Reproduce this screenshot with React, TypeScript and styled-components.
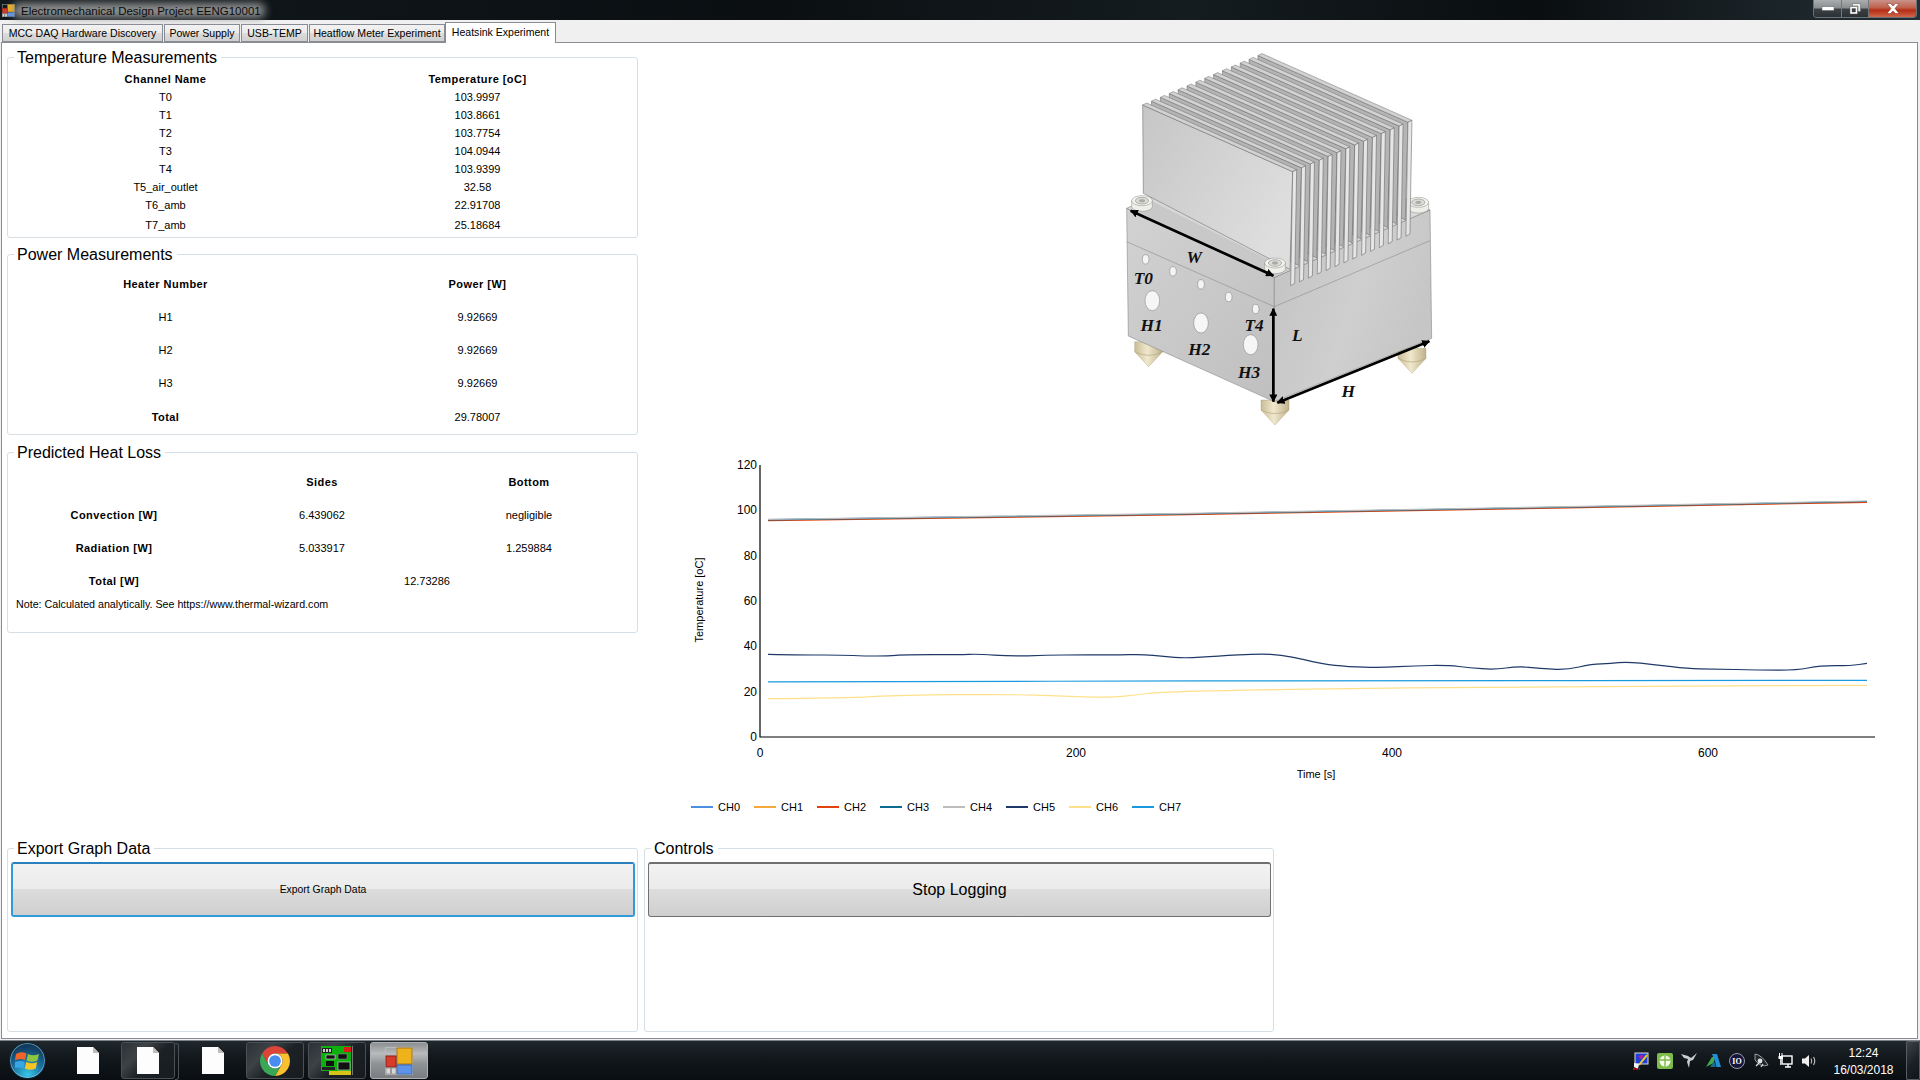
import * as React from 'react';
import styled, { createGlobalStyle } from 'styled-components';

const GlobalStyle = createGlobalStyle`
  html, body {
    margin: 0;
    padding: 0;
    background: #f0f0f0;
    overflow: hidden;
  }
  * {
    box-sizing: border-box;
  }
`;

const Shell = styled.div`
  width: 1920px;
  height: 1080px;
  display: flex;
  flex-direction: column;
  overflow: hidden;
  font-family: 'Liberation Sans', Arial, sans-serif;
  font-size: 11px;
  color: #000;
  background: #f0f0f0;
`;

/* window chrome */
const TitleBar = styled.div`
  height: 20px;
  flex: none;
  display: flex;
  align-items: center;
  padding-left: 2px;
  background: linear-gradient(90deg, #10181c 0%, #0b0f12 40%, #141c1f 62%, #0a0e10 80%, #243036 100%);
`;

const TitleText = styled.span`
  position: relative;
  margin-left: 6px;
  padding-top: 1px;
  font-size: 11.5px;
  color: #0b0b0b;
  white-space: nowrap;
  &::before {
    content: '';
    position: absolute;
    inset: -1px -4px -1px -8px;
    background: #8f9090;
    border-radius: 6px;
    filter: blur(4px);
    z-index: 0;
  }
  span {
    position: relative;
  }
`;

const WindowButtons = styled.div`
  margin-left: auto;
  margin-right: 3px;
  height: 18px;
  align-self: flex-start;
  display: flex;
  border: 1px solid #6c7478;
  border-top: 0;
  border-radius: 0 0 4px 4px;
  overflow: hidden;
`;

const WindowButton = styled.div<{ $width: number; $close?: boolean }>`
  width: ${(p) => p.$width}px;
  display: flex;
  align-items: center;
  justify-content: center;
  border-left: 1px solid #74797c;
  background: ${(p) =>
    p.$close
      ? 'linear-gradient(180deg, #c9938a 0%, #c0604c 45%, #b52d14 60%, #d0654a 100%)'
      : 'linear-gradient(180deg, #a9adae 0%, #8b8f91 45%, #3a4044 55%, #2a3034 100%)'};
  &:first-child {
    border-left: 0;
  }
`;

const TabStrip = styled.div`
  height: 22px;
  flex: none;
  display: flex;
  align-items: flex-end;
  padding-left: 2px;
  gap: 1px;
  background: #f0f0f0;
`;

const Tab = styled.div<{ $active?: boolean; $width: number }>`
  position: relative;
  z-index: 1;
  width: ${(p) => p.$width}px;
  height: ${(p) => (p.$active ? 21 : 18)}px;
  margin-bottom: ${(p) => (p.$active ? -1 : 0)}px;
  margin-left: ${(p) => (p.$active ? -1 : 0)}px;
  display: flex;
  align-items: center;
  justify-content: center;
  padding-bottom: ${(p) => (p.$active ? 2 : 0)}px;
  font-size: 10.55px;
  white-space: nowrap;
  border: 1px solid #898c95;
  border-bottom: ${(p) => (p.$active ? '0' : '1px solid #898c95')};
  background: ${(p) => (p.$active ? '#fff' : 'linear-gradient(180deg, #f2f2f2 0%, #ebebeb 50%, #dddddd 51%, #cfcfcf 100%)')};
`;

const TabPage = styled.div`
  height: 997px;
  flex: none;
  margin: 0 2px 0 1px;
  display: flex;
  flex-direction: column;
  border: 1px solid #898c95;
  background: #fff;
`;

const TopRow = styled.div`
  height: 805px;
  flex: none;
  display: flex;
`;

const LeftColumn = styled.div`
  width: 636px;
  flex: none;
  padding: 14px 0 0 5px;
  display: flex;
  flex-direction: column;
  gap: 16px;
  & > :last-child {
    margin-top: 1px;
  }
`;

const RightColumn = styled.div`
  flex: 1;
  display: flex;
  flex-direction: column;
`;

const BottomRow = styled.div`
  display: flex;
  gap: 6px;
  padding-left: 5px;
`;

const GroupBox = styled.section<{ $width?: number; $height?: number; $padLeft?: number; $padTop?: number }>`
  position: relative;
  width: ${(p) => p.$width ?? 631}px;
  height: ${(p) => p.$height ?? 181}px;
  padding: ${(p) => p.$padTop ?? 12}px 0 0 ${(p) => p.$padLeft ?? 0}px;
  border: 1px solid #d5dfe5;
  border-radius: 3px;
`;

const GroupTitle = styled.h2`
  position: absolute;
  top: -9px;
  left: 6px;
  margin: 0;
  padding: 0 4px 0 3px;
  background: #fff;
  font-size: 16px;
  line-height: 18px;
  font-weight: 400;
`;

const Cell = styled.div<{ $bold?: boolean; $span?: number }>`
  display: flex;
  align-items: center;
  justify-content: center;
  font-weight: ${(p) => (p.$bold ? 700 : 400)};
  letter-spacing: ${(p) => (p.$bold ? '0.45px' : '0')};
  grid-column: ${(p) => (p.$span ? `span ${p.$span}` : 'auto')};
`;

const TempGrid = styled.div`
  display: grid;
  grid-template-columns: 315px 309px;
  grid-auto-rows: 18px;
  & > :nth-last-child(-n + 2) {
    padding-top: 4px;
  }
`;

const PowerGrid = styled.div`
  display: grid;
  grid-template-columns: 315px 309px;
  grid-auto-rows: 33px;
  & > :nth-last-child(-n + 2) {
    padding-top: 2px;
  }
`;

const LossGrid = styled.div`
  display: grid;
  grid-template-columns: 212px 204px 210px;
  grid-auto-rows: 33px;
`;

const Note = styled.p`
  margin: 0;
  padding-left: 8px;
  font-size: 10.7px;
  line-height: 14px;
`;

const AeroButton = styled.button<{ $focused?: boolean; $large?: boolean }>`
  display: block;
  width: ${(p) => (p.$focused ? 624 : 623)}px;
  height: 55px;
  padding: 0;
  font-family: inherit;
  color: #000;
  font-size: ${(p) => (p.$large ? 16 : 10.4)}px;
  border: ${(p) => (p.$focused ? '2px solid #2f9bd8' : '1px solid #707070')};
  border-top: 2px solid ${(p) => (p.$focused ? '#2a7fbd' : '#6f6f6f')};
  border-radius: 3px;
  background: linear-gradient(180deg, #f2f2f2 0%, #ebebeb 48%, #dddddd 49%, #cfcfcf 100%);
`;

/* chart */
const ChartSvg = styled.svg`
  display: block;
  margin-left: 42px;
  width: 1240px;
  height: 352px;
`;

const AxisText = styled.text<{ $size?: number }>`
  font-family: 'Liberation Sans', Arial, sans-serif;
  font-size: ${(p) => p.$size ?? 12}px;
  fill: #000;
`;

const HeatsinkSvg = styled.svg`
  display: block;
  margin-left: 462px;
  width: 360px;
  height: 397px;
  flex: none;
`;

const SinkLabel = styled.text`
  font-family: 'Liberation Serif', 'Times New Roman', serif;
  font-size: 52px;
  font-weight: 700;
  font-style: italic;
  fill: #111;
  text-anchor: middle;
`;

const Legend = styled.div`
  display: flex;
  margin: 8px 0 0 53px;
`;

const LegendItem = styled.div`
  width: 63px;
  display: flex;
  align-items: center;
  gap: 5px;
  line-height: 14px;
`;

const LegendLine = styled.span<{ $color: string }>`
  width: 22px;
  height: 2px;
  background: ${(p) => p.$color};
`;

/* taskbar */
const Taskbar = styled.footer`
  margin-top: 1px;
  height: 40px;
  flex: none;
  display: flex;
  align-items: center;
  gap: 4px;
  padding-left: 9px;
  border-top: 1px solid #7d8489;
  background: linear-gradient(180deg, #20282d 0%, #12181c 40%, #0a0e12 100%);
`;

const StartOrb = styled.div`
  width: 37px;
  height: 37px;
  margin-right: 9px;
  flex: none;
  display: flex;
  align-items: center;
  justify-content: center;
  border-radius: 50%;
  border: 1px solid #0d2433;
  background: radial-gradient(circle at 50% 90%, #37c6e8 0%, #1a6c9c 45%, #123f63 75%, #0f2a40 100%);
  box-shadow: inset 0 0 0 1px rgba(160, 210, 235, 0.55);
`;

const TaskSlot = styled.div<{ $state?: 'open' | 'stacked' | 'active' }>`
  position: relative;
  width: 58px;
  height: 37px;
  flex: none;
  display: flex;
  align-items: center;
  justify-content: center;
  border-radius: 3px;
  ${(p) =>
    p.$state === 'active'
      ? 'border: 1px solid #aeb2b4; background: linear-gradient(180deg, #8b8f91 0%, #b9bbbc 30%, #8f9294 60%, #7a7e80 100%);'
      : p.$state
        ? 'border: 1px solid #4a5054; background: linear-gradient(135deg, #2b3135 0%, #3c4246 30%, #1c2125 55%, #181c20 100%);'
        : ''}
  ${(p) => (p.$state === 'stacked' ? 'width: 54px; margin-right: 5px;' : '')}
  ${(p) =>
    p.$state === 'stacked'
      ? `&::after {
          content: '';
          position: absolute;
          top: 0;
          right: -5px;
          width: 3px;
          height: 35px;
          border: 1px solid #4a5054;
          border-left: 0;
          border-radius: 0 3px 3px 0;
        }`
      : ''}
`;

const Tray = styled.div`
  margin-left: auto;
  display: flex;
  align-items: center;
  height: 100%;
`;

const TraySlot = styled.div`
  width: 24px;
  display: flex;
  align-items: center;
  justify-content: center;
`;

const Clock = styled.div`
  width: 85px;
  padding-top: 1px;
  display: flex;
  flex-direction: column;
  align-items: center;
  gap: 3px;
  color: #fff;
  font-size: 12px;
  line-height: 14px;
`;

const ShowDesktop = styled.div`
  width: 14px;
  height: 100%;
  border: 1px solid #555b60;
  border-radius: 1px;
  background: linear-gradient(135deg, #3c4347 0%, #1b2024 55%, #111519 100%);
`;

type Pt = [number, number];

const hot: Pt[] = [[768, 520], [1076, 515.7], [1270, 513], [1867, 501.7]];
const shift = (pts: Pt[], dy: number): Pt[] => pts.map(([x, y]) => [x, y + dy]);

const ch5: Pt[] = [
  [768, 654.3], [806, 655], [842, 655], [864, 656], [889, 656], [903, 654.7], [960, 654.7], [978, 654],
  [1010, 656.3], [1046, 655.3], [1081, 654.7], [1117, 655], [1142, 654.3], [1164, 656.3], [1185, 658.3],
  [1217, 656], [1260, 653.7], [1281, 655], [1303, 659.3], [1322, 664], [1348, 666.7], [1381, 667.7],
  [1415, 665.7], [1448, 665.3], [1470, 667.7], [1494, 669.7], [1518, 666.3], [1540, 668.3], [1566, 670],
  [1592, 664], [1611, 663.7], [1626, 661.7], [1655, 664.7], [1688, 668.7], [1711, 669], [1759, 670],
  [1796, 670.3], [1820, 665.7], [1851, 665.7], [1867, 663.3],
];

const ch6: Pt[] = [
  [768, 698.7], [842, 698.3], [903, 695], [1010, 694.3], [1060, 696], [1110, 697.7], [1135, 695], [1160, 692],
  [1260, 689.7], [1320, 688.9], [1496, 687], [1867, 685.3],
];

const ch7: Pt[] = [[768, 681.8], [1000, 681.5], [1100, 681], [1300, 680.8], [1867, 680.3]];

const channels = [
  { name: 'CH0', color: '#4a90e2', points: shift(hot, -0.3) },
  { name: 'CH1', color: '#f5a93b', points: shift(hot, 0.1) },
  { name: 'CH2', color: '#e2420f', points: shift(hot, 0.6) },
  { name: 'CH3', color: '#0f6a8f', points: shift(hot, -0.2) },
  { name: 'CH4', color: '#bdbdbd', points: shift(hot, -0.7) },
  { name: 'CH5', color: '#1f3a68', points: ch5 },
  { name: 'CH6', color: '#ffe08a', points: ch6 },
  { name: 'CH7', color: '#1a9ade', points: ch7 },
];

// midpoints as quadratic anchors, good enough for a smoothed chart line
const smooth = (pts: Pt[]) => {
  let d = `M${pts[0][0]} ${pts[0][1]}`;
  for (let i = 1; i < pts.length - 1; i++) {
    const mx = (pts[i][0] + pts[i + 1][0]) / 2;
    const my = (pts[i][1] + pts[i + 1][1]) / 2;
    d += ` Q${pts[i][0]} ${pts[i][1]} ${mx} ${my}`;
  }
  const last = pts[pts.length - 1];
  return `${d} L${last[0]} ${last[1]}`;
};

const yTicks = [0, 20, 40, 60, 80, 100, 120];
const xTicks = [0, 200, 400, 600];

const Chart: React.FC = () => (
  <ChartSvg viewBox="680 440 1240 352">
    <path d="M760 465 V737 H1875" fill="none" stroke="#000" strokeWidth="1.2" />
    {yTicks.map((v) => (
      <AxisText key={v} x={757} y={737 - v * 2.267 + 4} textAnchor="end">{v}</AxisText>
    ))}
    {xTicks.map((v) => (
      <AxisText key={v} x={760 + v * 1.58} y={757} textAnchor="middle">{v}</AxisText>
    ))}
    <AxisText $size={11} x={703} y={600} textAnchor="middle" transform="rotate(-90 703 600)">Temperature [oC]</AxisText>
    <AxisText $size={11} x={1316} y={778} textAnchor="middle">Time [s]</AxisText>
    {channels.map((c) => (
      <path key={c.name} d={smooth(c.points)} fill="none" stroke={c.color} strokeWidth="1.2" />
    ))}
  </ChartSvg>
);

const fins = Array.from({ length: 14 }, (_, i) => 13 - i);
const holes: Pt[] = [[137, 658], [219, 694], [303, 733], [386, 771], [467, 807]];
const bigHoles: Pt[] = [[157, 782], [303, 849], [452, 914]];

const poly = (pts: number[][]) => pts.map((p) => p.join(',')).join(' ');

const Foot: React.FC<{ x: number; y: number }> = ({ x, y }) => (
  <g>
    <path d={`M${x - 42} ${y} V${y + 30} L${x} ${y + 75} L${x + 42} ${y + 30} V${y} Z`} fill="url(#brass)" stroke="#9a8f6d" strokeWidth="1" />
    <path d={`M${x - 42} ${y + 30} Q${x} ${y + 52} ${x + 42} ${y + 30}`} fill="none" stroke="#b4a67f" strokeWidth="2" />
  </g>
);

const Screw: React.FC<{ x: number; y: number }> = ({ x, y }) => (
  <g>
    <path d={`M${x - 31} ${y - 8} V${y + 10} A31 14 0 0 0 ${x + 31} ${y + 10} V${y - 8} Z`} fill="#efefe9" stroke="#8a8a86" strokeWidth="1.5" />
    <ellipse cx={x} cy={y - 8} rx="31" ry="15" fill="#f4f4f0" stroke="#8a8a86" strokeWidth="1.5" />
    <ellipse cx={x} cy={y - 8} rx="20" ry="10" fill="#dcdcd6" stroke="#777" strokeWidth="1.5" />
    <ellipse cx={x} cy={y - 8} rx="9" ry="5" fill="#aaa" />
  </g>
);

const Heatsink: React.FC = () => (
  <HeatsinkSvg viewBox="0 9 1080 1191">
    <defs>
      <linearGradient id="brass" x1="0" x2="1" y1="0" y2="0">
        <stop offset="0" stopColor="#c9bd97" />
        <stop offset="0.45" stopColor="#f1e8cd" />
        <stop offset="1" stopColor="#bfb28b" />
      </linearGradient>
      <linearGradient id="sideFace" x1="0" x2="1" y1="0" y2="1">
        <stop offset="0" stopColor="#d2d2d2" />
        <stop offset="1" stopColor="#bfbfbf" />
      </linearGradient>
      <linearGradient id="rightFace" x1="0" x2="1" y1="0" y2="0.4">
        <stop offset="0" stopColor="#c2c2c2" />
        <stop offset="0.6" stopColor="#cfcfcf" />
        <stop offset="1" stopColor="#c6c6c6" />
      </linearGradient>
      <linearGradient id="finFace" x1="0" x2="1" y1="0" y2="0.6">
        <stop offset="0" stopColor="#c6c6c6" />
        <stop offset="1" stopColor="#dedede" />
      </linearGradient>
      <marker id="head" viewBox="0 0 10 10" refX="9" refY="5" markerWidth="3" markerHeight="3" orient="auto-start-reverse">
        <path d="M0 0 L10 5 L0 10 Z" fill="#000" />
      </marker>
    </defs>

    <Foot x={146} y={905} />
    <Foot x={936} y={925} />
    <Foot x={525} y={1080} />

    <polygon points="80,505 523,712 523,1085 85,888" fill="url(#sideFace)" stroke="#777" strokeWidth="1.5" />
    <polygon points="523,712 990,510 995,895 523,1085" fill="url(#rightFace)" stroke="#777" strokeWidth="1.5" />
    <polygon points="80,505 520,300 990,510 523,712" fill="#d9d9d9" stroke="#777" strokeWidth="1.5" />
    <polygon points="130,470 568,690 523,708 100,510" fill="#c8c8c8" />
    <path d="M80 605 L523 800 L990 602" fill="none" stroke="#808080" strokeWidth="1.5" />

    <Screw x={955} y={495} />

    {fins.map((i) => {
      const dx = 26.6 * i;
      const dy = -11.4 * i;
      return (
        <g key={i} transform={`translate(${dx} ${dy})`}>
          <polygon
            points={poly([[128, 195], [578, 395], [570, 688], [130, 460]])}
            fill={i === 0 ? 'url(#finFace)' : '#b4b4b4'}
            stroke="#666"
            strokeWidth="1.6"
          />
          <polygon points={poly([[128, 195], [140, 189], [590, 389], [578, 395]])} fill="#d2d2d2" stroke="#666" strokeWidth="1.4" />
          <polygon points={poly([[578, 395], [590, 389], [584, 730], [572, 737]])} fill="#e6e6e6" stroke="#5e5e5e" strokeWidth="1.6" />
        </g>
      );
    })}

    <Screw x={126} y={490} />
    <Screw x={525} y={677} />

    {holes.map(([x, y]) => (
      <ellipse key={x} cx={x} cy={y} rx="10" ry="14" fill="#f4f4f4" stroke="#7d7d7d" strokeWidth="1.5" />
    ))}
    {bigHoles.map(([x, y]) => (
      <ellipse key={x} cx={x} cy={y} rx="22" ry="30" fill="#f6f6f6" stroke="#7d7d7d" strokeWidth="1.5" />
    ))}

    <line x1="92" y1="512" x2="520" y2="707" stroke="#000" strokeWidth="8" markerStart="url(#head)" markerEnd="url(#head)" />
    <line x1="520" y1="806" x2="520" y2="1085" stroke="#000" strokeWidth="8" markerStart="url(#head)" markerEnd="url(#head)" />
    <line x1="532" y1="1088" x2="988" y2="904" stroke="#000" strokeWidth="8" markerStart="url(#head)" markerEnd="url(#head)" />

    <SinkLabel x={283} y={670}>W</SinkLabel>
    <SinkLabel x={130} y={732}>T0</SinkLabel>
    <SinkLabel x={155} y={872}>H1</SinkLabel>
    <SinkLabel x={298} y={946}>H2</SinkLabel>
    <SinkLabel x={447} y={1014}>H3</SinkLabel>
    <SinkLabel x={462} y={874}>T4</SinkLabel>
    <SinkLabel x={592} y={902}>L</SinkLabel>
    <SinkLabel x={745} y={1071}>H</SinkLabel>
  </HeatsinkSvg>
);

const AppGlyph: React.FC<{ size: number }> = ({ size }) => (
  <svg width={size} height={size} viewBox="0 0 28 28">
    <rect x="0.5" y="0.5" width="27" height="27" fill="none" stroke="#b9b9b9" />
    <rect x="12" y="1" width="15" height="16" fill="#efb21a" stroke="#a9791a" />
    <rect x="12" y="18" width="15" height="9" fill="#5d94ea" stroke="#3d6cb7" />
    <rect x="1" y="9" width="10" height="11" fill="#d83a2b" stroke="#8e2018" />
    <rect x="1" y="21" width="4.5" height="6" fill="#d8d8d8" stroke="#999" />
    <rect x="6.5" y="21" width="4.5" height="6" fill="#d8d8d8" stroke="#999" />
  </svg>
);

const DocIcon: React.FC = () => (
  <svg width="22" height="27" viewBox="0 0 22 27">
    <path d="M0 0 H16 L22 6 V27 H0 Z" fill="#fdfdfd" />
    <path d="M16 0 L22 6 H16 Z" fill="#bdbdbd" />
  </svg>
);

const ChromeIcon: React.FC = () => (
  <svg width="30" height="30" viewBox="2 2 44 44">
    <path d="M4.95 13 A22 22 0 0 1 43.05 13 H24 A11 11 0 0 0 14.47 29.5 Z" fill="#db4437" />
    <path d="M43.05 13 A22 22 0 0 1 24 46 L33.53 29.5 A11 11 0 0 0 24 13 Z" fill="#fbc02d" />
    <path d="M24 46 A22 22 0 0 1 4.95 13 L14.47 29.5 A11 11 0 0 0 33.53 29.5 Z" fill="#3aa757" />
    <circle cx="24" cy="24" r="11" fill="#fff" />
    <circle cx="24" cy="24" r="8.6" fill="#4a8cf0" />
  </svg>
);

const BoardIcon: React.FC = () => (
  <svg width="32" height="30" viewBox="0 0 32 30">
    <rect x="0" y="0" width="30" height="25" fill="#0db10d" />
    <rect x="8" y="25" width="22" height="4" fill="#d8c21a" />
    <rect x="1" y="2" width="10" height="5" fill="#222" />
    <rect x="2" y="3" width="2" height="3" fill="#ccc" />
    <rect x="5" y="3" width="2" height="3" fill="#ccc" />
    <rect x="8" y="3" width="2" height="3" fill="#ccc" />
    <rect x="23" y="1" width="7" height="5" fill="#e01818" />
    <rect x="5" y="9" width="9" height="4" fill="#111" stroke="#ddd" strokeWidth="0.6" />
    <rect x="17" y="8" width="9" height="5" fill="#111" stroke="#888" strokeWidth="0.6" />
    <rect x="5" y="15" width="8" height="5" fill="#111" />
    <rect x="1" y="21" width="13" height="3" fill="#222" />
    <rect x="17" y="16" width="12" height="8" fill="#111" stroke="#ddd" strokeWidth="0.6" />
    <rect x="31" y="0" width="1" height="29" fill="#777" />
  </svg>
);

const WinFlag: React.FC = () => (
  <svg width="25" height="22" viewBox="0 0 25 22">
    <path d="M1 4 Q6 1 11.5 3.5 L10 10 Q5 8 0 10.5 Z" fill="#f0642a" />
    <path d="M13 4 Q18 6.5 24 4 L22.5 10.5 Q17 13 11.5 10.5 Z" fill="#8cc63f" />
    <path d="M-0.2 12 Q5 10 9.7 12 L8.3 18.5 Q4 16.5 -1.5 18.5 Z" fill="#39a7e6" />
    <path d="M11.2 12 Q17 14.5 22.2 12 L20.8 18.5 Q15 21 9.8 18.5 Z" fill="#f7c325" />
  </svg>
);

const TrayIcons: React.FC = () => (
  <Tray>
    <TraySlot>
      <svg width="16" height="18" viewBox="0 0 16 18">
        <rect x="2" y="1" width="13" height="11" fill="#1f3fd8" stroke="#ddd" />
        <path d="M5 4 L10 3 L9 8 Z" fill="#c8189a" />
        <path d="M14 3 L6 13" stroke="#f2d21a" strokeWidth="2" />
        <path d="M1 11 L6 12 L5 17 L1 15 Z" fill="#f4f4f4" />
        <path d="M0 17 H7" stroke="#e01818" strokeWidth="1.6" strokeDasharray="2 1" />
      </svg>
    </TraySlot>
    <TraySlot>
      <svg width="16" height="16" viewBox="0 0 16 16">
        <rect x="0" y="0" width="16" height="16" rx="2" fill="#7dbb4a" />
        <circle cx="8" cy="8" r="5.5" fill="#f4fbe8" />
        <path d="M8 2.5 V13.5 M2.5 7 H13.5" stroke="#7dbb4a" strokeWidth="1.4" />
      </svg>
    </TraySlot>
    <TraySlot>
      <svg width="17" height="15" viewBox="0 0 17 15">
        <path d="M0 1 L7 3 L10 5 L16 0 L12 7 L9 8 L8 15 L6 9 L7 6 L3 5 Z" fill="#c9cdd0" />
      </svg>
    </TraySlot>
    <TraySlot>
      <svg width="15" height="13" viewBox="0 0 15 13">
        <path d="M0 13 L6 3 L9 3 L7.5 9 Z" fill="#3fae49" />
        <path d="M6 0 H11 L15 13 H10.5 L8.8 7 Z" fill="#1f8fd6" />
        <path d="M4 13 L7 8.5 H8.8 L9.8 13 Z" fill="#1a6c8f" />
      </svg>
    </TraySlot>
    <TraySlot>
      <svg width="16" height="16" viewBox="0 0 16 16">
        <circle cx="8" cy="8" r="7.5" fill="#16163c" stroke="#9a9aa8" />
        <text x="8" y="11" textAnchor="middle" fontSize="8" fontWeight="700" fontFamily="Liberation Serif, serif" fill="#fff">IO</text>
      </svg>
    </TraySlot>
    <TraySlot>
      <svg width="16" height="16" viewBox="0 0 16 16">
        <path d="M2 1 Q9 2 15 12 Q8 15 2 7 Z" fill="#23282c" stroke="#b8bcbe" strokeWidth="0.8" />
        <circle cx="7" cy="8" r="2.4" fill="#dfe2e4" />
        <path d="M3 13 L6 10 M8 14 L10 11" stroke="#dfe2e4" strokeWidth="1.2" />
      </svg>
    </TraySlot>
    <TraySlot>
      <svg width="15" height="16" viewBox="0 0 15 16">
        <rect x="4" y="3" width="10" height="8" fill="#0d1114" stroke="#fff" strokeWidth="1.4" />
        <path d="M7 14 H13 M10 11 V14" stroke="#fff" strokeWidth="1.4" />
        <path d="M1.5 0 V3 M4 0 V3" stroke="#fff" />
        <rect x="0.5" y="3" width="4.5" height="3" fill="#fff" />
        <path d="M2.7 6 V12" stroke="#fff" />
      </svg>
    </TraySlot>
    <TraySlot>
      <svg width="15" height="14" viewBox="0 0 15 14">
        <path d="M0 4.5 H3 L7 1 V13 L3 9.5 H0 Z" fill="#f0f0f0" />
        <path d="M9 4.5 Q10.5 7 9 9.5 M11.5 3 Q14 7 11.5 11" fill="none" stroke="#bfc3c6" strokeWidth="1.1" />
      </svg>
    </TraySlot>
    <Clock>
      <span>12:24</span>
      <span>16/03/2018</span>
    </Clock>
    <ShowDesktop />
  </Tray>
);

const tempRows = [
  ['T0', '103.9997'],
  ['T1', '103.8661'],
  ['T2', '103.7754'],
  ['T3', '104.0944'],
  ['T4', '103.9399'],
  ['T5_air_outlet', '32.58'],
  ['T6_amb', '22.91708'],
  ['T7_amb', '25.18684'],
];

const tabs = [
  { label: 'MCC DAQ Hardware Discovery', width: 161 },
  { label: 'Power Supply', width: 76 },
  { label: 'USB-TEMP', width: 67 },
  { label: 'Heatflow Meter Experiment', width: 136 },
];

const App: React.FC = () => (
  <Shell>
    <GlobalStyle />
    <TitleBar>
      <AppGlyph size={13} />
      <TitleText><span>Electromechanical Design Project EENG10001</span></TitleText>
      <WindowButtons>
        <WindowButton $width={27}>
          <svg width="12" height="5" viewBox="0 0 12 5"><rect width="12" height="4" y="0.5" fill="#fff" stroke="#555" strokeWidth="0.5" /></svg>
        </WindowButton>
        <WindowButton $width={27}>
          <svg width="12" height="12" viewBox="0 0 12 12">
            <path d="M3.5 0.5 H11.5 V8.5 H9 V3 H3.5 Z" fill="#eee" stroke="#555" strokeWidth="0.5" />
            <path d="M1 3.5 H8.5 V11 H1 Z M3 5.5 V9 H6.5 V5.5 Z" fill="#fff" fillRule="evenodd" stroke="#555" strokeWidth="0.5" />
          </svg>
        </WindowButton>
        <WindowButton $width={48} $close>
          <svg width="14" height="11" viewBox="0 0 14 11">
            <path d="M1 0.5 H4.5 L7 3 L9.5 0.5 H13 L9 5.5 L13 10.5 H9.5 L7 8 L4.5 10.5 H1 L5 5.5 Z" fill="#fff" stroke="#7a2a1c" strokeWidth="0.5" />
          </svg>
        </WindowButton>
      </WindowButtons>
    </TitleBar>

    <TabStrip>
      {tabs.map((t) => (
        <Tab key={t.label} $width={t.width}>{t.label}</Tab>
      ))}
      <Tab $active $width={111}>Heatsink Experiment</Tab>
    </TabStrip>

    <TabPage>
      <TopRow>
        <LeftColumn>
          <GroupBox>
            <GroupTitle>Temperature Measurements</GroupTitle>
            <TempGrid>
              <Cell $bold>Channel Name</Cell>
              <Cell $bold>Temperature [oC]</Cell>
              {tempRows.map(([name, value]) => (
                <React.Fragment key={name}>
                  <Cell>{name}</Cell>
                  <Cell>{value}</Cell>
                </React.Fragment>
              ))}
            </TempGrid>
          </GroupBox>

          <GroupBox>
            <GroupTitle>Power Measurements</GroupTitle>
            <PowerGrid>
              <Cell $bold>Heater Number</Cell>
              <Cell $bold>Power [W]</Cell>
              <Cell>H1</Cell>
              <Cell>9.92669</Cell>
              <Cell>H2</Cell>
              <Cell>9.92669</Cell>
              <Cell>H3</Cell>
              <Cell>9.92669</Cell>
              <Cell $bold>Total</Cell>
              <Cell>29.78007</Cell>
            </PowerGrid>
          </GroupBox>

          <GroupBox>
            <GroupTitle>Predicted Heat Loss</GroupTitle>
            <LossGrid>
              <Cell />
              <Cell $bold>Sides</Cell>
              <Cell $bold>Bottom</Cell>
              <Cell $bold>Convection [W]</Cell>
              <Cell>6.439062</Cell>
              <Cell>negligible</Cell>
              <Cell $bold>Radiation [W]</Cell>
              <Cell>5.033917</Cell>
              <Cell>1.259884</Cell>
              <Cell $bold>Total [W]</Cell>
              <Cell $span={2}>12.73286</Cell>
            </LossGrid>
            <Note>Note: Calculated analytically. See https://www.thermal-wizard.com</Note>
          </GroupBox>
        </LeftColumn>

        <RightColumn>
          <Heatsink />
          <Chart />
          <Legend>
            {channels.map((c) => (
              <LegendItem key={c.name}>
                <LegendLine $color={c.color} />
                {c.name}
              </LegendItem>
            ))}
          </Legend>
        </RightColumn>
      </TopRow>

      <BottomRow>
        <GroupBox $height={184} $padLeft={3} $padTop={13}>
          <GroupTitle>Export Graph Data</GroupTitle>
          <AeroButton $focused>Export Graph Data</AeroButton>
        </GroupBox>
        <GroupBox $width={630} $height={184} $padLeft={3} $padTop={13}>
          <GroupTitle>Controls</GroupTitle>
          <AeroButton $large>Stop Logging</AeroButton>
        </GroupBox>
      </BottomRow>
    </TabPage>

    <Taskbar>
      <StartOrb><WinFlag /></StartOrb>
      <TaskSlot><DocIcon /></TaskSlot>
      <TaskSlot $state="stacked"><DocIcon /></TaskSlot>
      <TaskSlot><DocIcon /></TaskSlot>
      <TaskSlot $state="open"><ChromeIcon /></TaskSlot>
      <TaskSlot $state="open"><BoardIcon /></TaskSlot>
      <TaskSlot $state="active"><AppGlyph size={28} /></TaskSlot>
      <TrayIcons />
    </Taskbar>
  </Shell>
);

export default App;
